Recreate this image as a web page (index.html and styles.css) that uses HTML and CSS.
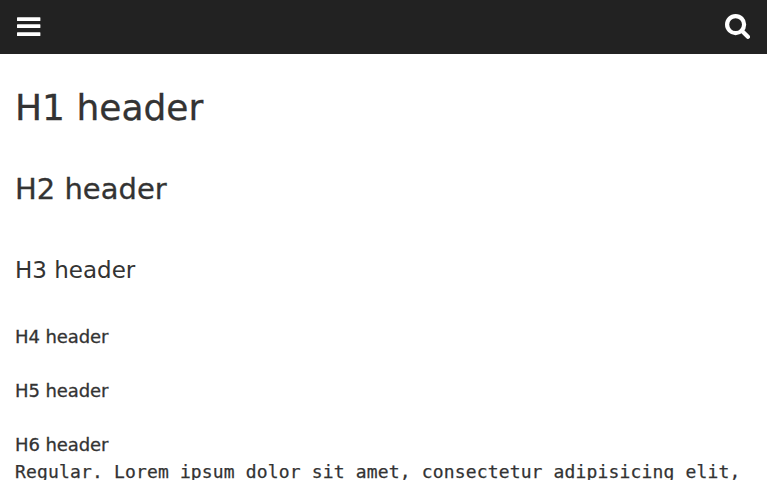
FILE: index.html
```html
<!DOCTYPE html>
<html lang="en">
<head>
<meta charset="utf-8">
<title>Typography</title>
<link rel="stylesheet" href="styles.css">
</head>
<body>
<header class="topbar">
<svg class="menu" viewBox="0 0 24 20"><rect y="0.2" width="23.4" height="3.8" rx=".6"/><rect y="7.2" width="23.4" height="3.8" rx=".6"/><rect y="15.2" width="23.4" height="3.8" rx=".6"/></svg>
<svg class="search" viewBox="0 0 25 25"><circle cx="10.6" cy="10.6" r="8.5"/><path d="M16.8 16.8l6.1 6"/></svg>
</header>
<main class="content">
<h1>H1 header</h1>
<h2>H2 header</h2>
<h3>H3 header</h3>
<h4>H4 header</h4>
<h5>H5 header</h5>
<h6>H6 header</h6>
<p>Regular. Lorem ipsum dolor sit amet, consectetur adipisicing elit,</p>
</main>
</body>
</html>
```
FILE: styles.css
```css
body {
  margin: 0;
  height: 480px;
  overflow: hidden;
  background: #fff;
  color: #333;
  font: 18px/27px "DejaVu Sans", sans-serif;
}
.topbar {
  box-sizing: border-box;
  height: 54px;
  padding: 0 17px;
  background: #222;
  display: flex;
  align-items: center;
  justify-content: space-between;
}
.topbar svg { display: block; }
.menu { width: 24px; height: 20px; fill: #fff; }
.search {
  width: 25px;
  height: 25px;
  margin-bottom: 1px;
  fill: none;
  stroke: #fff;
  stroke-width: 4.2;
  stroke-linecap: round;
}
.content { padding: 0 15px; }
h1, h2, h3, h4, h5, h6 { margin: 0; font-weight: 400; }
h1 { padding-top: 27px; font-size: 36px; line-height: 54px; -webkit-text-stroke: 0.3px; }
h2 { padding-top: 27px; font-size: 29px; line-height: 54px; -webkit-text-stroke: 0.3px; }
h3 { padding-top: 41px; font-size: 23px; line-height: 27px; }
h4, h5, h6 {
  padding-top: 27px;
  font-size: 18px;
  line-height: 27px;
  letter-spacing: -0.08px;
  -webkit-text-stroke: 0.3px;
}
h4 { padding-top: 39px; }
p {
  margin: 0;
  font-family: "DejaVu Sans Mono", monospace;
  letter-spacing: 0.155px;
  white-space: nowrap;
  -webkit-text-stroke: 0.25px;
}
```
